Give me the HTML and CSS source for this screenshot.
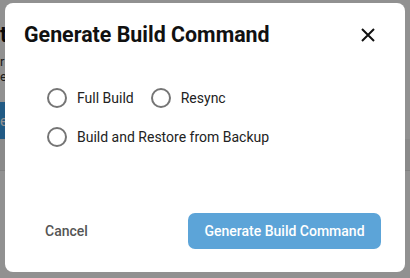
FILE: index.html
```html
<!DOCTYPE html>
<html lang="en">
<head>
  <meta charset="UTF-8" />
  <title>Generate Build Command</title>
  <link rel="stylesheet" href="styles.css">
</head>
<body>
  <!-- Page behind the dialog -->
  <div class="page">
    <h2 class="page-title">t</h2>
    <p class="page-text">r</p>
    <p class="page-text">e</p>
    <button class="page-button">e</button>
    <div class="page-band"></div>
  </div>

  <!-- Dialog -->
  <div class="backdrop">
    <div class="dialog">
      <div class="dialog-header">
        <h1 class="dialog-title">Generate Build Command</h1>
        <button class="close-button" aria-label="close">
          <svg width="14" height="14" viewBox="0 0 14 14">
            <path d="M1 1 L13 13 M13 1 L1 13" stroke="#111" stroke-width="2" fill="none"/>
          </svg>
        </button>
      </div>

      <div class="dialog-content">
        <div class="radio-row">
          <label class="radio"><span class="radio-circle"></span>Full Build</label>
          <label class="radio"><span class="radio-circle"></span>Resync</label>
        </div>
        <div class="radio-row">
          <label class="radio"><span class="radio-circle"></span>Build and Restore from Backup</label>
        </div>
      </div>

      <div class="dialog-actions">
        <button class="btn-text">Cancel</button>
        <button class="btn-primary">Generate Build Command</button>
      </div>
    </div>
  </div>
</body>
</html>
```

FILE: styles.css
```css
* { box-sizing: border-box; margin: 0; padding: 0; }

body {
  font-family: Roboto, "Liberation Sans", sans-serif;
  background: #fff;
  width: 410px;
  height: 278px;
  overflow: hidden;
  position: relative;
}

/* Page behind */
.page {
  padding-top: 22px;
}

.page-title {
  font-size: 22px;
  font-weight: 700;
  color: #111;
  line-height: 26px;
}

.page-text {
  font-size: 13px;
  color: #333;
  line-height: 15px;
}

.page-text:first-of-type { margin-top: 6px; }

.page-button {
  display: block;
  margin-top: 18px;
  width: 20px;
  height: 37px;
  border: none;
  background: #3a9ee8;
  color: #fff;
  font-family: inherit;
  font-size: 14px;
  text-align: left;
}

.page-band {
  height: 32px;
  background: #f3f3f3;
  border-bottom: 1px solid #e3e3e3;
}

/* Dialog */
.backdrop {
  position: absolute;
  top: 0; left: 0;
  width: 100%; height: 100%;
  background: rgba(0, 0, 0, 0.43);
  display: flex;
  align-items: flex-start;
  justify-content: center;
  padding-top: 3px;
}

.dialog {
  width: 400px;
  height: 269px;
  background: #fff;
  border-radius: 8px;
  display: flex;
  flex-direction: column;
}

.dialog-header {
  display: flex;
  align-items: center;
  justify-content: space-between;
  padding: 16px 30px 16px 19px;
}

.dialog-title {
  font-size: 21.4px;
  font-weight: 700;
  line-height: 32px;
  color: #111;
}

.close-button {
  background: none;
  border: none;
  width: 14px;
  height: 14px;
  display: flex;
}

.dialog-content {
  padding: 11px 0 0 42px;
}

.radio-row {
  display: flex;
  height: 39px;
  align-items: center;
}

.radio {
  display: flex;
  align-items: center;
  font-size: 14px;
  color: #222;
  margin-right: 17px;
}

.radio-circle {
  width: 20px;
  height: 20px;
  border: 2px solid #757575;
  border-radius: 50%;
  margin-right: 10px;
}

.dialog-actions {
  margin-top: auto;
  display: flex;
  justify-content: space-between;
  align-items: center;
  padding: 0 24px 23px 32px;
}

.btn-text {
  background: none;
  border: none;
  font-family: inherit;
  font-size: 14px;
  font-weight: 500;
  color: #555;
  padding: 6px 8px;
}

.btn-primary {
  width: 193px;
  height: 36px;
  border: none;
  border-radius: 7px;
  background: #5ca4d8;
  color: #fff;
  font-family: inherit;
  font-size: 14px;
  font-weight: 500;
}
```
